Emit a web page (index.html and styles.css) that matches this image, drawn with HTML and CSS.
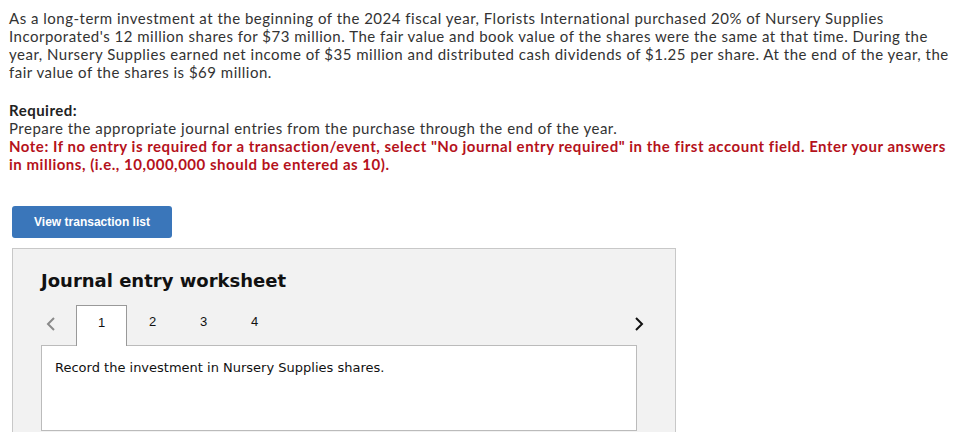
FILE: index.html
```html
<!DOCTYPE html>
<html>
<head>
<meta charset="utf-8">
<link rel="stylesheet" href="styles.css">
</head>
<body>
<div class="question">
  <p class="intro">As a long-term investment at the beginning of the 2024 fiscal year, Florists International purchased 20% of Nursery Supplies<br>Incorporated's 12 million shares for $73 million. The fair value and book value of the shares were the same at that time. During the<br>year, Nursery Supplies earned net income of $35 million and distributed cash dividends of $1.25 per share. At the end of the year, the<br>fair value of the shares is $69 million.</p>
  <div class="required">
    <div class="req-title">Required:</div>
    <div>Prepare the appropriate journal entries from the purchase through the end of the year.</div>
    <div class="note">Note: If no entry is required for a transaction/event, select "No journal entry required" in the first account field. Enter your answers<br>in millions, (i.e., 10,000,000 should be entered as 10).</div>
  </div>
</div>
<button class="view-btn">View transaction list</button>
<div class="worksheet">
  <h2 class="ws-title">Journal entry worksheet</h2>
  <div class="tabs-row">
    <span class="arrow prev"><svg width="10" height="14" viewBox="0 0 10 14"><path d="M8 1 L2 7 L8 13" fill="none" stroke="#8a8a8a" stroke-width="2"/></svg></span>
    <div class="tab active">1</div>
    <div class="tab">2</div>
    <div class="tab">3</div>
    <div class="tab">4</div>
    <span class="spacer"></span>
    <span class="arrow next"><svg width="10" height="14" viewBox="0 0 10 14"><path d="M2 1 L8 7 L2 13" fill="none" stroke="#111" stroke-width="2"/></svg></span>
  </div>
  <div class="content">Record the investment in Nursery Supplies shares.</div>
</div>
</body>
</html>
```
FILE: styles.css
```css
body {
  margin: 0;
  padding: 0 12px;
  font-family: "Open Sans", "Liberation Sans", sans-serif;
  color: #333;
  background: #fff;
}
.question {
  padding-top: 9px;
  margin-left: -3px;
  margin-right: -12px;
  font-family: Lato, "Open Sans", sans-serif;
  font-size: 15px;
  line-height: 18px;
  letter-spacing: 0.5px;
  white-space: nowrap;
}
.intro {
  margin: 0;
}
.required {
  margin-top: 20px;
}
.req-title {
  font-weight: 700;
  color: #222;
}
.note {
  color: #b5121b;
  font-weight: 700;
  letter-spacing: 0.52px;
}
.view-btn {
  display: block;
  margin-top: 33px;
  width: 160px;
  height: 32px;
  background: #3a76ba;
  color: #fff;
  border: none;
  border-radius: 3px;
  font-family: "Liberation Sans", Arial, sans-serif;
  font-weight: 700;
  font-size: 12px;
  padding: 0;
}
.worksheet {
  margin-top: 10px;
  width: 664px;
  height: 184px;
  background: #f2f2f2;
  border: 1px solid #c8c8c8;
  border-bottom: none;
  padding: 0 38px 0 28px;
  box-sizing: border-box;
}
.ws-title {
  margin: 19px 0 0 0;
  font-family: "DejaVu Sans", Verdana, sans-serif;
  font-size: 18px;
  font-weight: 700;
  color: #111;
  line-height: 26px;
}
.tabs-row {
  display: flex;
  align-items: flex-end;
  margin-top: 11px;
  height: 40px;
}
.arrow {
  display: flex;
  align-self: center;
  margin-top: -3px;
}
.prev {
  margin-left: 5px;
  width: 30px;
}
.tab {
  width: 51px;
  height: 40px;
  box-sizing: border-box;
  display: flex;
  align-items: center;
  justify-content: center;
  font-family: "Liberation Sans", Arial, sans-serif;
  font-size: 13px;
  color: #111;
  padding-bottom: 8px;
}
.tab.active {
  background: #fff;
  border: 1px solid #999;
  border-bottom: none;
  position: relative;
  z-index: 1;
  margin-bottom: -1px;
  height: 41px;
}
.spacer { flex: 1; }
.next {
  margin-right: -7px;
}
.content {
  background: #fff;
  border: 1px solid #bbb;
  height: 86px;
  box-sizing: border-box;
  padding: 14px 13px;
  font-family: "DejaVu Sans", Verdana, sans-serif;
  font-size: 13px;
  color: #111;
}
```
